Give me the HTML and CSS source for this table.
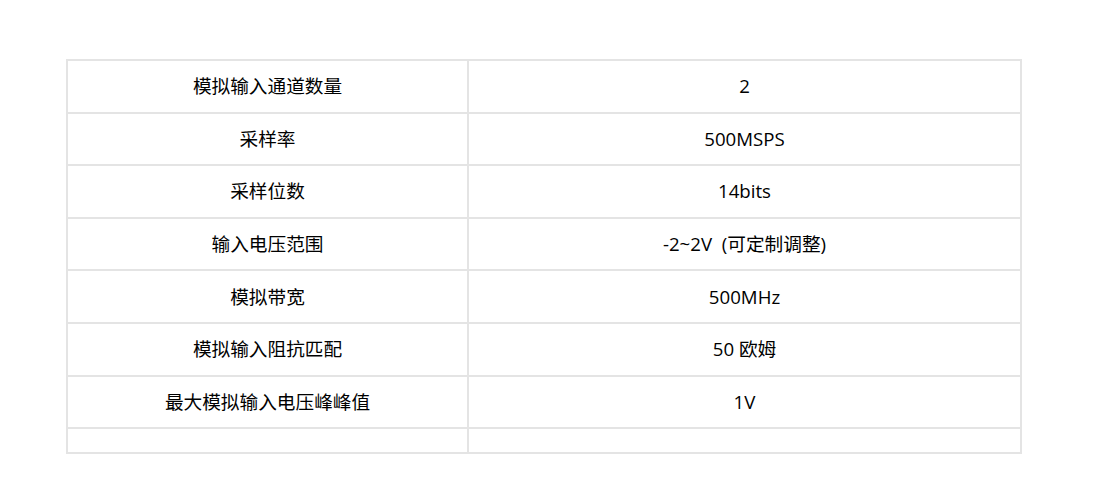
FILE: index.html
```html
<!DOCTYPE html>
<html lang="zh-CN">
<head>
<meta charset="utf-8">
<title>参数表</title>
<link rel="stylesheet" href="styles.css">
</head>
<body>
<div class="wrap">
  <table class="spec">
    <colgroup><col class="c1"><col class="c2"></colgroup>
    <tbody>
      <tr><td>模拟输入通道数量</td><td>2</td></tr>
      <tr><td>采样率</td><td>500MSPS</td></tr>
      <tr><td>采样位数</td><td>14bits</td></tr>
      <tr><td>输入电压范围</td><td>-2~2V&nbsp; (可定制调整)</td></tr>
      <tr><td>模拟带宽</td><td>500MHz</td></tr>
      <tr><td>模拟输入阻抗匹配</td><td>50 欧姆</td></tr>
      <tr><td>最大模拟输入电压峰峰值</td><td>1V</td></tr>
      <tr class="empty"><td></td><td></td></tr>
    </tbody>
  </table>
</div>
</body>
</html>
```

FILE: styles.css
```css
html, body {
  margin: 0;
  padding: 0;
  background: #fff;
}
body {
  font-family: "Open Sans", "Noto Sans CJK SC", sans-serif;
  color: #000;
}
.wrap {
  padding: 59px 0 0 66px;
}
.spec {
  border-collapse: separate;
  border-spacing: 0;
  border: 1px solid #e4e4e4;
  width: 956px;
  table-layout: fixed;
}
.c1 { width: 401px; }
.c2 { width: 553px; }
.spec td {
  border: 1px solid #e4e4e4;
  padding: 11.3px 10px;
  height: 28px;
  line-height: 28px;
  font-size: 18.67px;
  font-weight: 400;
  text-align: center;
  vertical-align: middle;
  font-family: "Open Sans", "Noto Sans CJK SC", sans-serif;
  box-sizing: content-box;
}
.spec .empty td {
  height: 0;
  line-height: 0;
  padding: 11.5px 10px;
}
```
